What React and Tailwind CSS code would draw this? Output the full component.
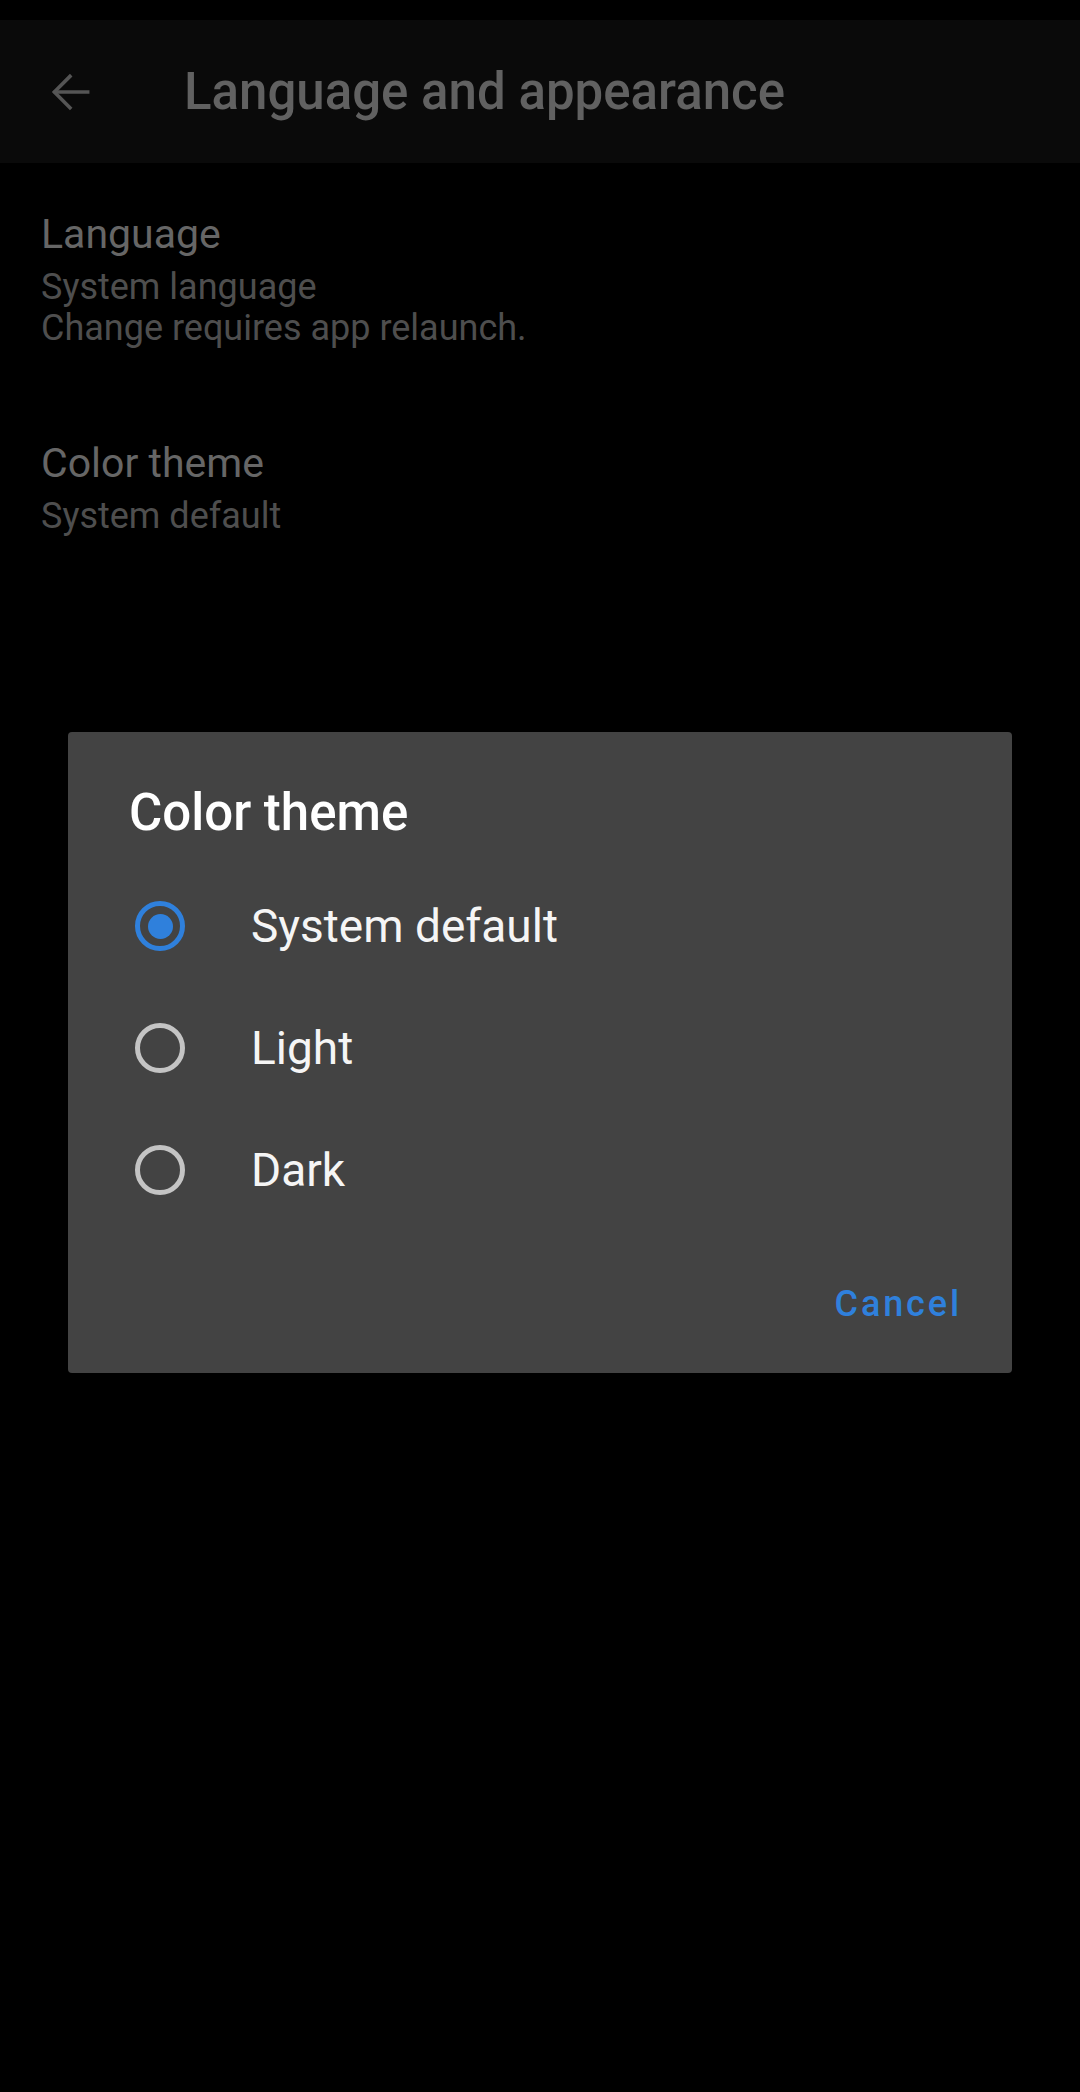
import React, { useState } from 'react';

const font = { fontFamily: 'Roboto, "Noto Sans", sans-serif' };

function Radio({ checked }) {
  return (
    <div
      className={`flex h-[50px] w-[50px] items-center justify-center rounded-full border-[5px] ${
        checked ? 'border-[#2f80dc]' : 'border-[#c4c4c4]'
      }`}
    >
      {checked && <div className="h-[25px] w-[25px] rounded-full bg-[#2f80dc]" />}
    </div>
  );
}

function App() {
  const [theme, setTheme] = useState('system');
  const options = [
    { id: 'system', label: 'System default' },
    { id: 'light', label: 'Light' },
    { id: 'dark', label: 'Dark' },
  ];

  return (
    <div className="relative min-h-screen bg-black" style={font}>
      <div className="h-[20px] bg-black" />
      <header className="flex h-[143px] items-center bg-[#0a0a0a]">
        <div className="flex h-[60px] w-[60px] ml-[41px] items-center justify-center">
          <svg width="50" height="50" viewBox="0 0 24 24" fill="none" stroke="#555555" strokeWidth="1.7" strokeLinecap="square">
            <path d="M20 12H4.5" />
            <path d="M11.5 4.5L4 12l7.5 7.5" />
          </svg>
        </div>
        <h1 className="ml-[83px] text-[51px] leading-[60px] font-medium text-[#616161]">
          Language and appearance
        </h1>
      </header>

      <main className="pl-[41px] pt-[46px]">
        <div>
          <div className="text-[41px] leading-[50px] text-[#666666]">Language</div>
          <div className="mt-[8px] text-[36px] leading-[41px] text-[#4e4e4e]">
            <div>System language</div>
            <div>Change requires app relaunch.</div>
          </div>
        </div>
        <div className="mt-[89px]">
          <div className="text-[41px] leading-[50px] text-[#666666]">Color theme</div>
          <div className="mt-[8px] text-[36px] leading-[41px] text-[#4e4e4e]">System default</div>
        </div>
      </main>

      <div className="absolute left-[68px] top-[732px] w-[944px] rounded-[4px] bg-[#434343] pt-[51px] pb-[24px] shadow-2xl">
        <h2 className="pl-[61px] text-[51px] leading-[60px] font-medium text-white">Color theme</h2>
        <div className="mt-[22px]">
          {options.map((o) => (
            <button
              key={o.id}
              onClick={() => setTheme(o.id)}
              className="flex h-[122px] w-full items-center pl-[67px] text-left"
            >
              <Radio checked={theme === o.id} />
              <span className="ml-[66px] text-[46px] text-[#f5f5f5]">{o.label}</span>
            </button>
          ))}
        </div>
        <div className="mt-[28px] flex justify-end pr-[46px]">
          <button className="h-[90px] px-[4px] text-[36px] font-medium tracking-[0.08em] text-[#2f80dc]">
            Cancel
          </button>
        </div>
      </div>
    </div>
  );
}

export default App;
